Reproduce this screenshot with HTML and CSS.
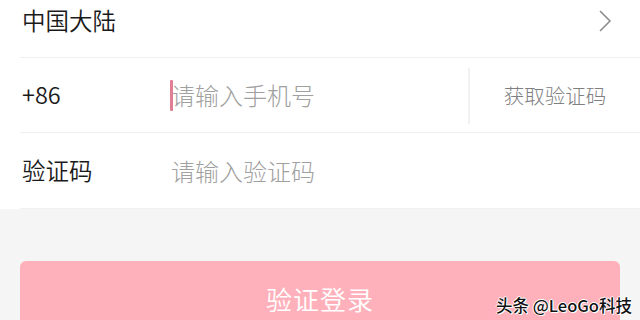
FILE: index.html
```html
<!DOCTYPE html>
<html lang="zh-CN">
<head>
<meta charset="utf-8">
<link rel="stylesheet" href="styles.css">
</head>
<body>
<div class="page">
  <div class="form">
    <div class="row row-first">
      <span class="label">中国大陆</span>
      <svg class="chev" width="14" height="22" viewBox="0 0 14 22"><polyline points="2,1 12,11 2,21" fill="none" stroke="#8a8a8a" stroke-width="1.5"/></svg>
    </div>
    <div class="row">
      <span class="label code">+86</span>
      <div class="input"><span class="cursor"></span><span class="ph">请输入手机号</span></div>
      <div class="vline"></div>
      <span class="getcode">获取验证码</span>
    </div>
    <div class="row row-last">
      <span class="label code">验证码</span>
      <div class="input"><span class="ph">请输入验证码</span></div>
    </div>
  </div>
  <div class="btn">验证登录</div>
  <div class="mark">头条 @LeoGo科技</div>
</div>
</body>
</html>
```
FILE: styles.css
```css
html, body {
  margin: 0;
  padding: 0;
}
body {
  width: 640px;
  height: 320px;
  overflow: hidden;
  background: #f6f5f6;
  font-family: "Noto Sans CJK SC", "Noto Sans", sans-serif;
}
.page {
  position: relative;
  height: 320px;
  overflow: hidden;
}
.form {
  background: #fff;
  padding-left: 20px;
}
.row {
  display: flex;
  align-items: center;
  height: 74px;
  border-bottom: 1px solid #efefef;
}
.row-first {
  height: 41px;
  padding-bottom: 16px;
  padding-right: 28px;
  justify-content: space-between;
}
.row-last {
  height: 75px;
  border-bottom: 1px solid #f1f1f1;
}
.label {
  font-size: 23.5px;
  font-weight: 350;
  color: #1a1a1a;
  margin-left: 2px;
  line-height: 1;
}
.code {
  width: 149px;
  flex: none;
}
.input {
  flex: 1;
  display: flex;
  align-items: center;
  height: 100%;
}
.cursor {
  width: 3px;
  height: 31px;
  background: #e27e93;
  margin-left: -1px;
  margin-right: -2px;
  border-radius: 1px;
}
.ph {
  font-size: 24px;
  font-weight: 300;
  color: #a0a0a0;
  line-height: 1;
}
.vline {
  width: 2px;
  height: 56px;
  background: #f1f1f1;
  margin-top: 2px;
}
.getcode {
  width: 170px;
  text-align: center;
  font-size: 20.5px;
  font-weight: 300;
  color: #808080;
  line-height: 1;
}
.chev {
  display: block;
}
.btn {
  margin: 52px 20px 0 20px;
  height: 59px;
  border-radius: 6px 6px 0 0;
  background: #ffb1bb;
  color: #ffffff;
  font-size: 26px;
  font-weight: 350;
  line-height: 1;
  display: flex;
  align-items: flex-start;
  justify-content: center;
  padding-top: 25px;
  box-sizing: border-box;
  letter-spacing: 1px;
}
.mark {
  position: absolute;
  right: 8px;
  bottom: 7px;
  font-size: 16.5px;
  font-weight: 500;
  color: #111;
  line-height: 1;
  text-shadow: 1px 1px 0 #fff, -1px 0 0 #fff, 0 -1px 0 #fff, 1px 0 0 #fff;
}
```
